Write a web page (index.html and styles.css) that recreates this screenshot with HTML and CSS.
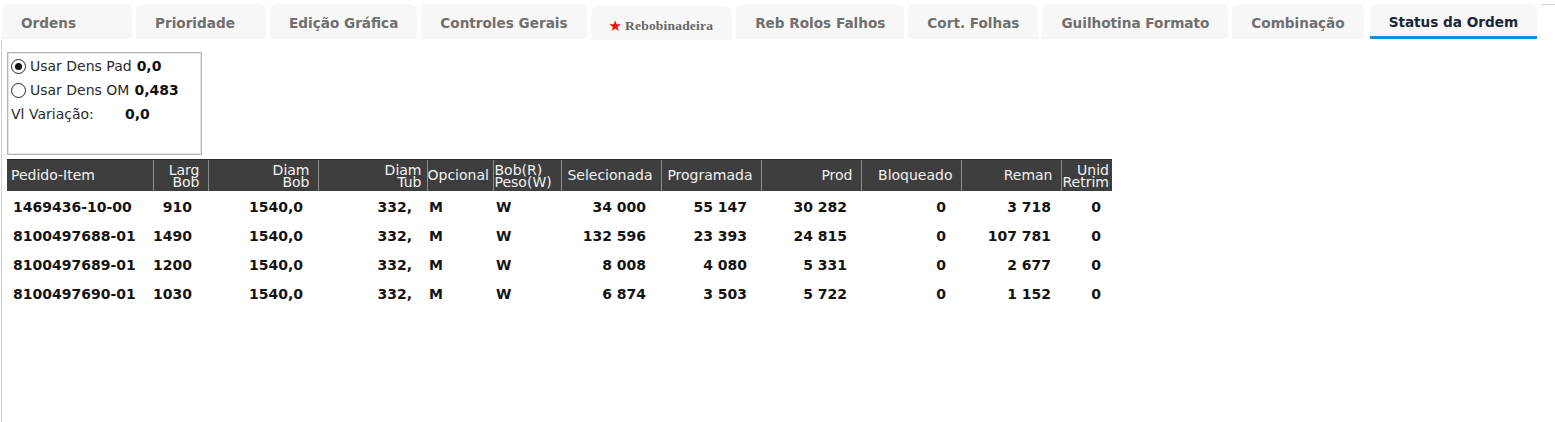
FILE: index.html
```html
<!DOCTYPE html>
<html lang="pt">
<head>
<meta charset="utf-8">
<title>Status da Ordem</title>
<link rel="stylesheet" href="styles.css">
</head>
<body>
<div class="tabs">
  <div class="tab">Ordens</div>
  <div class="tab">Prioridade</div>
  <div class="tab">Edição Gráfica</div>
  <div class="tab">Controles Gerais</div>
  <div class="tab tab-rebob"><span class="star">★</span><span class="rebob-text">Rebobinadeira</span></div>
  <div class="tab">Reb Rolos Falhos</div>
  <div class="tab">Cort. Folhas</div>
  <div class="tab">Guilhotina Formato</div>
  <div class="tab">Combinação</div>
  <div class="tab tab-active">Status da Ordem</div>
  <div class="tabs-rest"></div>
</div>
<div class="content">
  <div class="dens-panel">
    <div class="dens-row"><span class="radio radio-on"></span><span class="dens-label">Usar Dens Pad</span><b class="dens-value">0,0</b></div>
    <div class="dens-row"><span class="radio"></span><span class="dens-label">Usar Dens OM</span><b class="dens-value">0,483</b></div>
    <div class="dens-row"><span class="var-label">Vl Variação:</span><b class="dens-value dens-value-var">0,0</b></div>
  </div>
  <table class="grid">
    <colgroup>
      <col class="w-ped"><col class="w-larg"><col class="w-dbob"><col class="w-dtub"><col class="w-opc"><col class="w-bob"><col class="w-100"><col class="w-100"><col class="w-100"><col class="w-100"><col class="w-100"><col class="w-unid">
    </colgroup>
    <thead>
      <tr>
        <th class="h-left h-ped">Pedido-Item</th>
        <th class="h-two">Larg<br>Bob</th>
        <th class="h-two">Diam<br>Bob</th>
        <th class="h-two h-tub">Diam<br>Tub</th>
        <th class="h-left h-opc">Opcional</th>
        <th class="h-left h-two h-bob">Bob(R)<br>Peso(W)</th>
        <th>Selecionada</th>
        <th>Programada</th>
        <th>Prod</th>
        <th>Bloqueado</th>
        <th>Reman</th>
        <th class="h-two h-unid">Unid<br>Retrim</th>
      </tr>
    </thead>
    <tbody>
      <tr>
        <td class="d-ped">1469436-10-00</td><td class="d-larg">910</td><td class="d-num">1540,0</td><td class="d-num">332,</td><td class="d-opc">M</td><td class="d-bob">W</td><td class="d-num">34 000</td><td class="d-num2">55 147</td><td class="d-num2">30 282</td><td class="d-num">0</td><td class="d-reman">3 718</td><td class="d-unid">0</td>
      </tr>
      <tr>
        <td class="d-ped">8100497688-01</td><td class="d-larg">1490</td><td class="d-num">1540,0</td><td class="d-num">332,</td><td class="d-opc">M</td><td class="d-bob">W</td><td class="d-num">132 596</td><td class="d-num2">23 393</td><td class="d-num2">24 815</td><td class="d-num">0</td><td class="d-reman">107 781</td><td class="d-unid">0</td>
      </tr>
      <tr>
        <td class="d-ped">8100497689-01</td><td class="d-larg">1200</td><td class="d-num">1540,0</td><td class="d-num">332,</td><td class="d-opc">M</td><td class="d-bob">W</td><td class="d-num">8 008</td><td class="d-num2">4 080</td><td class="d-num2">5 331</td><td class="d-num">0</td><td class="d-reman">2 677</td><td class="d-unid">0</td>
      </tr>
      <tr>
        <td class="d-ped">8100497690-01</td><td class="d-larg">1030</td><td class="d-num">1540,0</td><td class="d-num">332,</td><td class="d-opc">M</td><td class="d-bob">W</td><td class="d-num">6 874</td><td class="d-num2">3 503</td><td class="d-num2">5 722</td><td class="d-num">0</td><td class="d-reman">1 152</td><td class="d-unid">0</td>
      </tr>
    </tbody>
  </table>
</div>
</body>
</html>
```
FILE: styles.css
```css
* { box-sizing: border-box; }
html, body { margin: 0; padding: 0; background: #fff; }
body {
  font-family: "DejaVu Sans", Verdana, sans-serif;
  color: #222;
  overflow: hidden;
}

/* Tabs */
.tabs {
  display: flex;
  align-items: flex-start;
  gap: 4px;
  height: 40px;
  padding: 4px 0 0 2px;
}
.tab {
  height: 35px;
  min-width: 130px;
  padding: 3px 19px 0 19px;
  background: #f7f7f7;
  border-radius: 7px 7px 0 0;
  display: flex;
  align-items: center;
  font-size: 13.6px;
  font-weight: bold;
  color: #6f6f6f;
  white-space: nowrap;
}
.tab-rebob {
  margin-top: 2px;
  height: 34px;
  padding: 6px 19px 0 18px;
}
.star {
  color: #ee1111;
  font-size: 15px;
  font-weight: normal;
  margin-right: 3px;
  font-family: "DejaVu Sans", sans-serif;
}
.rebob-text {
  font-family: "Liberation Serif", "Times New Roman", serif;
  font-size: 13.5px;
  font-weight: bold;
  color: #666;
  letter-spacing: 0.2px;
}
.tab-active {
  margin-left: 2px;
  color: #1a2636;
  border-bottom: 3px solid #1f8ad8;
}
.tabs-rest {
  flex: 1;
  height: 1px;
  background: #d4d4d4;
}

/* Content */
.content {
  margin-left: 1px;
  border-left: 1px solid #cfcfcf;
  height: 382px;
  padding: 12px 0 0 4px;
}

.dens-panel {
  width: 195px;
  height: 103px;
  margin-left: 1px;
  border: 1px solid #b5b5b5;
  box-shadow: inset 1px 1px 0 #e4e4e4, inset -1px -1px 0 #e4e4e4;
  padding: 1px 0 0 3px;
  font-size: 14px;
  color: #2a2a2a;
}
.dens-row {
  height: 24px;
  display: flex;
  align-items: center;
  white-space: nowrap;
}
.radio {
  width: 15px;
  height: 15px;
  border: 1px solid #222;
  border-radius: 50%;
  margin-right: 4px;
  position: relative;
  flex: none;
}
.radio-on::after {
  content: "";
  position: absolute;
  left: 3px;
  top: 3px;
  width: 7px;
  height: 7px;
  border-radius: 50%;
  background: #111;
}
.dens-value {
  font-weight: bold;
  color: #111;
  margin-left: 5px;
}
.dens-value-var { margin-left: 0; }
.var-label {
  display: inline-block;
  width: 114px;
}

/* Grid */
.grid {
  margin-top: 4px;
  margin-left: 1px;
  width: 1105px;
  table-layout: fixed;
  border-collapse: collapse;
  border-spacing: 0;
}
.w-ped { width: 146px; }
.w-larg { width: 55px; }
.w-dbob { width: 110px; }
.w-dtub { width: 109px; }
.w-opc { width: 66px; }
.w-bob { width: 68px; }
.w-100 { width: 100px; }
.w-unid { width: 51px; }

.grid th {
  height: 31px;
  background: #3e3e3e;
  color: #f2f2f2;
  font-size: 14px;
  font-weight: normal;
  text-align: right;
  padding: 0 8px 0 0;
  border-left: 1px solid #8d8d8d;
  border-top: 1px solid #2a2a2a;
  white-space: nowrap;
  overflow: hidden;
  vertical-align: middle;
}
.grid th:first-child { border-left: none; }
.grid th.h-two { line-height: 12px; padding-top: 1px; }
.grid th.h-left { text-align: left; }
.grid th.h-ped { padding-left: 4px; }
.grid th.h-opc { padding-left: 0; padding-right: 0; }
.grid th.h-bob { padding-left: 1px; padding-right: 0; }
.grid th.h-tub { padding-right: 5px; }
.grid th.h-unid { padding-right: 3px; }

.grid td {
  height: 29px;
  font-size: 14px;
  font-weight: bold;
  color: #141414;
  text-align: right;
  white-space: nowrap;
  padding: 0 15px 0 0;
  vertical-align: middle;
}
.grid tbody tr:first-child td { height: 31px; padding-top: 2px; }
.grid td.d-ped { text-align: left; padding-left: 6px; padding-right: 0; }
.grid td.d-larg { padding-right: 16px; }
.grid td.d-opc { text-align: left; padding-left: 2px; padding-right: 0; }
.grid td.d-bob { text-align: left; padding-left: 3px; padding-right: 0; }
.grid td.d-num2 { padding-right: 14px; }
.grid td.d-reman { padding-right: 10px; }
.grid td.d-unid { padding-right: 11px; }
```
